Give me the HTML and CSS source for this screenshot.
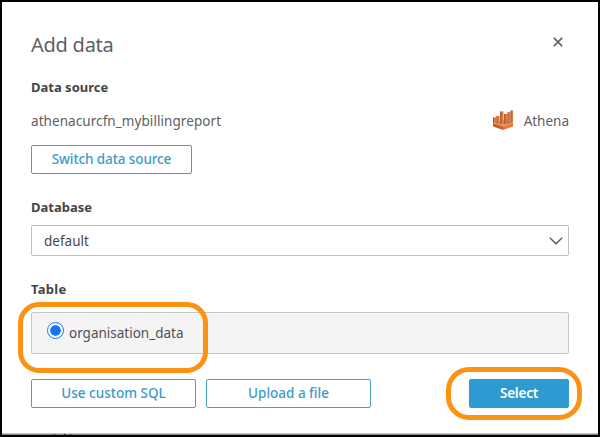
FILE: index.html
```html
<!DOCTYPE html>
<html lang="en">
<head>
<meta charset="utf-8">
<title>Add data</title>
<link rel="stylesheet" href="styles.css">
</head>
<body>
<main class="dialog">
  <header class="header">
    <h1 class="title">Add data</h1>
    <button class="close" aria-label="Close"><svg width="10" height="10" viewBox="0 0 10 10"><path d="M.9.9 9.1 9.1M9.1.9.9 9.1" stroke="#666" stroke-width="1.8"/></svg></button>
  </header>
  <h2 class="label">Data source</h2>
  <div class="source">
    <span class="source-name">athenacurcfn_mybillingreport</span>
    <span class="service">
      <svg width="22" height="20" viewBox="0 0 22 20">
        <path d="M1 13 11 16v4L1 16.500z" fill="#c9602b"/>
        <path d="M21 13 11 16v4l10-3.500z" fill="#e07a3e"/>
        <path d="M1 13 11 9.500 21 13l-10 3.500z" fill="#ea9a68"/>
        <path d="M1 7.500h3V13l-3-.5zM4.500 6h3v8l-3-.8zM8.200 1.500h3.300V14.500l-3.300-.8zM12.200 4h3v10l-3 .5zM15.600 2.200h2.600V13.500l-2.600.5zM18.600.5H21V12.500l-2.400.7z" fill="#e0793c"/>
        <path d="M1 7.500h1V13H1zM4.500 6h1v7.500h-1zM8.200 1.500h1.200V14H8.200zM12.200 4h1v10h-1zM15.600 2.200h.9V13.500h-.9zM18.600.5h.9V13h-.9z" fill="#a4572e"/>
      </svg>
      <span class="service-name">Athena</span>
    </span>
  </div>
  <button class="btn switch">Switch data source</button>
  <h2 class="label database-label">Database</h2>
  <div class="select"><span>default</span><svg width="14" height="8" viewBox="0 0 14 8"><path d="m.8.8 6.200 6 6.200-6" fill="none" stroke="#555" stroke-width="1.400"/></svg></div>
  <h2 class="label table-label">Table</h2>
  <div class="row"><span class="radio"></span><span>organisation_data</span><i class="mark mark-table"></i></div>
  <footer class="actions">
    <button class="btn">Use custom SQL</button>
    <button class="btn">Upload a file</button>
    <div class="confirm"><button class="btn primary">Select</button><i class="mark mark-select"></i></div>
  </footer>
  <svg class="edge" width="596" height="2" viewBox="0 0 596 2"><path d="M0 0h596v1H0z" fill="#c4c4c4"/><path d="M0 1h596v1H0z" fill="#8e8e8e"/><path d="M52 1h1v1h-1zM62 1h2v1h-2zM68 1h1v1h-1z" fill="#333"/></svg>
</main>
</body>
</html>
```
FILE: styles.css
```css
* { box-sizing: border-box; }
body { margin: 0; background: #000; font-family: "Noto Sans", "Open Sans", sans-serif; font-size: 13.5px; color: #606060; }
.dialog { width: 600px; height: 437px; border: 2px solid #000; border-bottom-width: 2px; padding: 27px 29px 0; background: #fff; overflow: hidden; display: flex; flex-direction: column; }
.header { height: 32px; display: flex; align-items: center; justify-content: space-between; }
.title { margin: 0; font-size: 20px; line-height: 32px; font-weight: 400; letter-spacing: -.25px; color: #606060; }
.close { width: 10px; height: 10px; padding: 0; margin: -6px 6px 0 0; border: 0; background: none; display: flex; }
.label { margin: 16px 0 0; height: 20px; font-size: 13px; line-height: 20px; font-weight: 700; color: #444; }
.source { height: 24px; margin-top: 12px; display: flex; align-items: center; justify-content: space-between; white-space: nowrap; }
.source-name { letter-spacing: .07px; }
.service { display: flex; align-items: center; gap: 10px; }
.service svg { margin-top: -2px; }
.btn { width: 165px; height: 29px; padding: 0; border: 1px solid #4a9fc4; border-radius: 2px; background: #fff; color: #3c9bc8; font: 500 13.5px/27px "Noto Sans", sans-serif; white-space: nowrap; }
.switch { display: block; width: 161px; margin-top: 12px; letter-spacing: -.1px; }
.database-label { margin-top: 23px; }
.select { height: 31px; margin-top: 8px; padding: 0 5px 0 12px; border: 1px solid #bfbfbf; border-radius: 2px; display: flex; align-items: center; justify-content: space-between; color: #484848; }
.table-label { margin-top: 23px; letter-spacing: .3px; }
.row { position: relative; height: 42px; margin-top: 13px; padding-left: 15px; border: 1px solid #c6c6c6; border-radius: 2px; display: flex; align-items: center; gap: 5px; background: #f4f4f4; color: #505050; }
.radio { width: 17px; height: 17px; margin-top: -5px; border: 1.5px solid #1674e8; border-radius: 50%; background: radial-gradient(circle, #1674f5 4.900px, #fff 5.600px); }
.mark { position: absolute; border: 5px solid #fc9214; pointer-events: none; }
.mark-table { left: -14px; top: -11px; width: 190px; height: 71px; border-radius: 21px; }
.actions { margin-top: 25px; display: flex; gap: 10px; }
.confirm { position: relative; margin-left: auto; }
.primary { display: block; width: 100px; border-color: #2d9bd2; background: #2d9bd2; color: #fff; font-weight: 600; letter-spacing: -.2px; }
.mark-select { left: -23px; top: -12px; width: 136px; height: 53px; border-radius: 23px; }
.edge { display: block; margin: auto -29px 0; flex: none; }
```
